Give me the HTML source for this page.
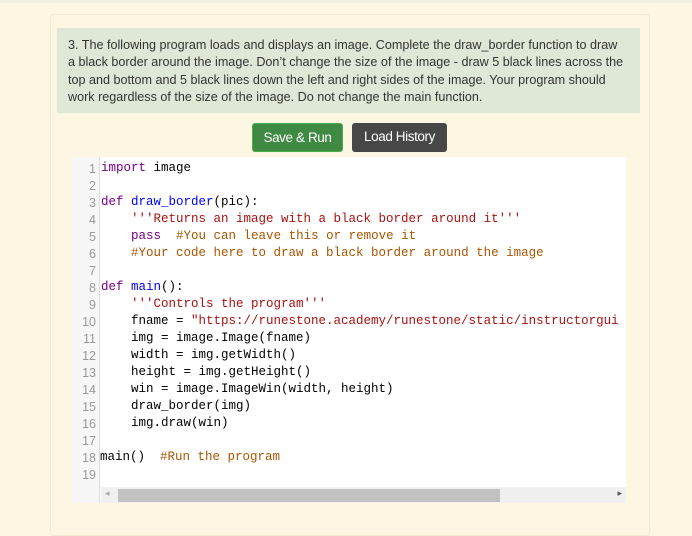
<!DOCTYPE html>
<html><head><style>
body{margin:0;width:692px;height:514px;background:#fcf6e3;overflow:hidden;position:relative;font-family:"Liberation Sans",Arial,sans-serif}
.top{position:absolute;left:0;top:0;width:692px;height:3px;background:#f5f0e4}
.card{position:absolute;left:50px;top:14px;width:598px;height:520px;border:1px solid #f3ead2;border-radius:4px;background:#fcf6e3}
.q{position:absolute;left:57px;top:28px;width:583px;height:85px;background:#dfe8d6;box-sizing:border-box;padding:9px 0 0 11px;color:#333;font-size:12.6px;line-height:17.4px;letter-spacing:0;white-space:nowrap;overflow:hidden}
.btn{position:absolute;top:123px;height:29px;border-radius:3px;color:#fff;font-size:13.5px;line-height:27px;text-align:center;letter-spacing:-0.4px}
.g{left:252px;width:91px;background:#3e8a42;border:1px solid #4cae4c;box-sizing:border-box}
.d{left:352px;width:95px;background:#474747}
.ed{position:absolute;left:72px;top:157px;width:554px;height:346px;background:#fff}
.gut{position:absolute;left:0;top:0;width:27px;height:346px;background:#f7f7f7;border-right:1px solid #ddd}
.ln{position:absolute;left:0;width:24px;text-align:right;color:#999;font-family:"Liberation Sans",sans-serif;font-size:12.5px}
.code{position:absolute;left:29px;top:0;font-family:"Liberation Mono",monospace;font-size:12.5px;white-space:pre;color:#000}
.l{position:absolute;left:0;height:17px;line-height:17px}
.k{color:#708}.f{color:#00f}.s{color:#a11}.c{color:#a50}
.sb{position:absolute;left:29px;top:330px;width:525px;height:16px;background:#f0f0f0}
.th{position:absolute;left:17px;top:2px;width:382px;height:13px;background:#c1c1c1}
</style></head><body>
<div class="top"></div>
<div class="card"></div>
<div class="q">3. The following program loads and displays an image. Complete the draw_border function to draw<br>a black border around the image. Don’t change the size of the image - draw 5 black lines across the<br>top and bottom and 5 black lines down the left and right sides of the image. Your program should<br>work regardless of the size of the image. Do not change the main function.</div>
<div class="btn g">Save &amp; Run</div>
<div class="btn d">Load History</div>
<div class="ed">
<div class="gut"></div>
<div class="ln" style="top:4px;line-height:17px">1<br>2<br>3<br>4<br>5<br>6<br>7<br>8<br>9<br>10<br>11<br>12<br>13<br>14<br>15<br>16<br>17<br>18<br>19</div>
<div class="code">
<div class="l" style="top:3px"><span class="k">import</span> image</div>
<div class="l" style="top:37px"><span class="k">def</span> <span class="f">draw_border</span>(pic):</div>
<div class="l" style="top:54px">    <span class="s">'''Returns an image with a black border around it'''</span></div>
<div class="l" style="top:71px">    <span class="k">pass</span>  <span class="c">#You can leave this or remove it</span></div>
<div class="l" style="top:88px">    <span class="c">#Your code here to draw a black border around the image</span></div>
<div class="l" style="top:122px"><span class="k">def</span> <span class="f">main</span>():</div>
<div class="l" style="top:139px">    <span class="s">'''Controls the program'''</span></div>
<div class="l" style="top:156px">    fname = <span class="s">"https://runestone.academy/runestone/static/instructorgui</span></div>
<div class="l" style="top:173px">    img = image.Image(fname)</div>
<div class="l" style="top:190px">    width = img.getWidth()</div>
<div class="l" style="top:207px">    height = img.getHeight()</div>
<div class="l" style="top:224px">    win = image.ImageWin(width, height)</div>
<div class="l" style="top:241px">    draw_border(img)</div>
<div class="l" style="top:258px">    img.draw(win)</div>
<div class="l" style="top:292px;left:-1px">main()  <span class="c">#Run the program</span></div>
</div>
<div class="sb"><div class="th"></div><span style="position:absolute;left:4px;top:1px;font-size:9px;color:#aaa">◂</span><span style="position:absolute;right:4px;top:1px;font-size:9px;color:#555">▸</span></div>
</div>
</body></html>
